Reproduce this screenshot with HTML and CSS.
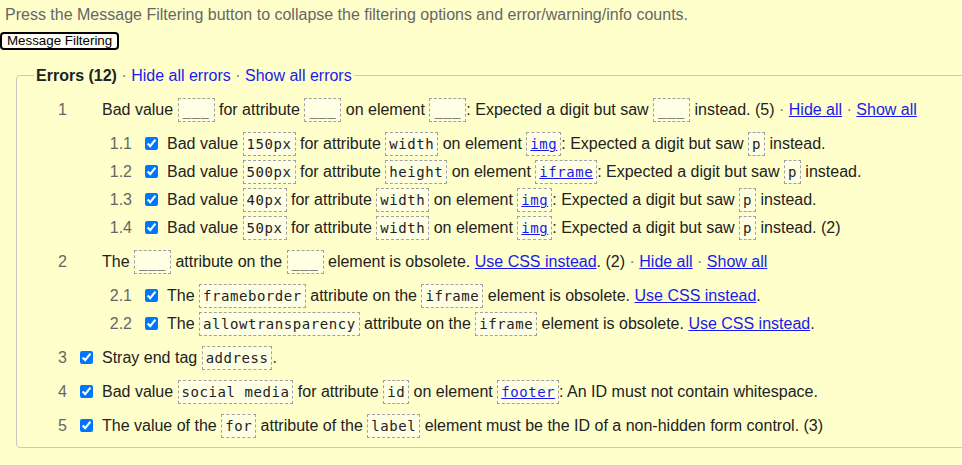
FILE: index.html
```html
<!DOCTYPE html>
<html lang="en">
<head>
<meta charset="utf-8">
<title>Message Filtering</title>
<link rel="stylesheet" href="styles.css">
</head>
<body>
<p class="intro">Press the Message Filtering button to collapse the filtering options and error/warning/info counts.</p>
<button class="filter-btn" type="button">Message Filtering</button>
<fieldset class="group">
  <legend class="group-title"><strong>Errors (12)</strong> <span class="sep">·</span> <a href="#">Hide all errors</a> <span class="sep">·</span> <a href="#">Show all errors</a></legend>

  <div class="row">
    <span class="num">1</span><span class="chk"></span>
    <span class="msg">Bad value <code class="ph">___</code> for attribute <code class="ph">___</code> on element <code class="ph">___</code>: Expected a digit but saw <code class="ph">___</code> instead. <span class="cnt">(5)</span> <span class="sep">·</span> <a href="#">Hide all</a> <span class="sep">·</span> <a href="#">Show all</a></span>
  </div>
  <div class="sub">
    <div class="row subrow"><span class="num">1.1</span><span class="chk"><input type="checkbox" checked></span><span class="msg">Bad value <code>150px</code> for attribute <code>width</code> on element <code><a href="#">img</a></code>: Expected a digit but saw <code>p</code> instead.</span></div>
    <div class="row subrow"><span class="num">1.2</span><span class="chk"><input type="checkbox" checked></span><span class="msg">Bad value <code>500px</code> for attribute <code>height</code> on element <code><a href="#">iframe</a></code>: Expected a digit but saw <code>p</code> instead.</span></div>
    <div class="row subrow"><span class="num">1.3</span><span class="chk"><input type="checkbox" checked></span><span class="msg">Bad value <code>40px</code> for attribute <code>width</code> on element <code><a href="#">img</a></code>: Expected a digit but saw <code>p</code> instead.</span></div>
    <div class="row subrow"><span class="num">1.4</span><span class="chk"><input type="checkbox" checked></span><span class="msg">Bad value <code>50px</code> for attribute <code>width</code> on element <code><a href="#">img</a></code>: Expected a digit but saw <code>p</code> instead. (2)</span></div>
  </div>

  <div class="row">
    <span class="num">2</span><span class="chk"></span>
    <span class="msg">The <code class="ph">___</code> attribute on the <code class="ph">___</code> element is obsolete. <a href="#">Use CSS instead</a>. <span class="cnt">(2)</span> <span class="sep">·</span> <a href="#">Hide all</a> <span class="sep">·</span> <a href="#">Show all</a></span>
  </div>
  <div class="sub">
    <div class="row subrow"><span class="num">2.1</span><span class="chk"><input type="checkbox" checked></span><span class="msg">The <code>frameborder</code> attribute on the <code>iframe</code> element is obsolete. <a href="#">Use CSS instead</a>.</span></div>
    <div class="row subrow"><span class="num">2.2</span><span class="chk"><input type="checkbox" checked></span><span class="msg">The <code>allowtransparency</code> attribute on the <code>iframe</code> element is obsolete. <a href="#">Use CSS instead</a>.</span></div>
  </div>

  <div class="row"><span class="num">3</span><span class="chk"><input type="checkbox" checked></span><span class="msg">Stray end tag <code>address</code>.</span></div>
  <div class="row"><span class="num">4</span><span class="chk"><input type="checkbox" checked></span><span class="msg">Bad value <code>social media</code> for attribute <code>id</code> on element <code><a href="#">footer</a></code>: An ID must not contain whitespace.</span></div>
  <div class="row"><span class="num">5</span><span class="chk"><input type="checkbox" checked></span><span class="msg">The value of the <code>for</code> attribute of the <code>label</code> element must be the ID of a non-hidden form control. (3)</span></div>
</fieldset>
</body>
</html>
```
FILE: styles.css
```css
html, body {
  margin: 0;
  padding: 0;
  background: #ffffcc;
  overflow: hidden;
}
body {
  font-family: "Liberation Sans", Arial, sans-serif;
  font-size: 16px;
  color: #222;
}
a {
  color: #1a1aee;
}
.intro {
  margin: 0;
  padding: 6px 0 0 5px;
  line-height: 18px;
  color: #666;
  white-space: nowrap;
}
.filter-btn {
  display: block;
  margin: 8px 0 0 0;
  height: 18px;
  padding: 0 5px;
  font-family: "Liberation Sans", Arial, sans-serif;
  font-size: 13.33px;
  line-height: 14px;
  color: #000;
  background: #fffff6;
  border: 2px solid #000;
  border-radius: 4px;
}
.group {
  margin: 15px -60px 0 16px;
  padding: 8px 0 4px 17px;
  border: 1px solid #c8c8c0;
  border-radius: 4px;
  min-width: 0;
}
.group-title {
  padding: 0 2px;
  line-height: 20px;
  white-space: nowrap;
  transform: translateY(1px);
}
.group-title a {
  text-decoration: none;
}
.sep {
  color: #777;
}
.row {
  display: flex;
  align-items: center;
  height: 34px;
  white-space: nowrap;
}
.subrow {
  height: 28px;
}
.sub {
  margin: 3px 0 3px 65px;
}
.num {
  width: 33px;
  flex: none;
  text-align: right;
  color: #666;
}
.chk {
  width: 35px;
  flex: none;
  display: flex;
  align-items: center;
}
.chk input {
  width: 13px;
  height: 13px;
  margin: -2px 0 0 13px;
  accent-color: #0075ff;
}
.msg {
  line-height: 24px;
}
code {
  display: inline-block;
  font-family: "DejaVu Sans Mono", Consolas, monospace;
  font-size: 14px;
  letter-spacing: 0.55px;
  line-height: 20px;
  padding: 1px 3px;
  border: 1px dashed #a0a0a0;
  background: #ffffe4;
  vertical-align: baseline;
  color: #222;
}
code.ph {
  padding: 1px 4px;
}
```
